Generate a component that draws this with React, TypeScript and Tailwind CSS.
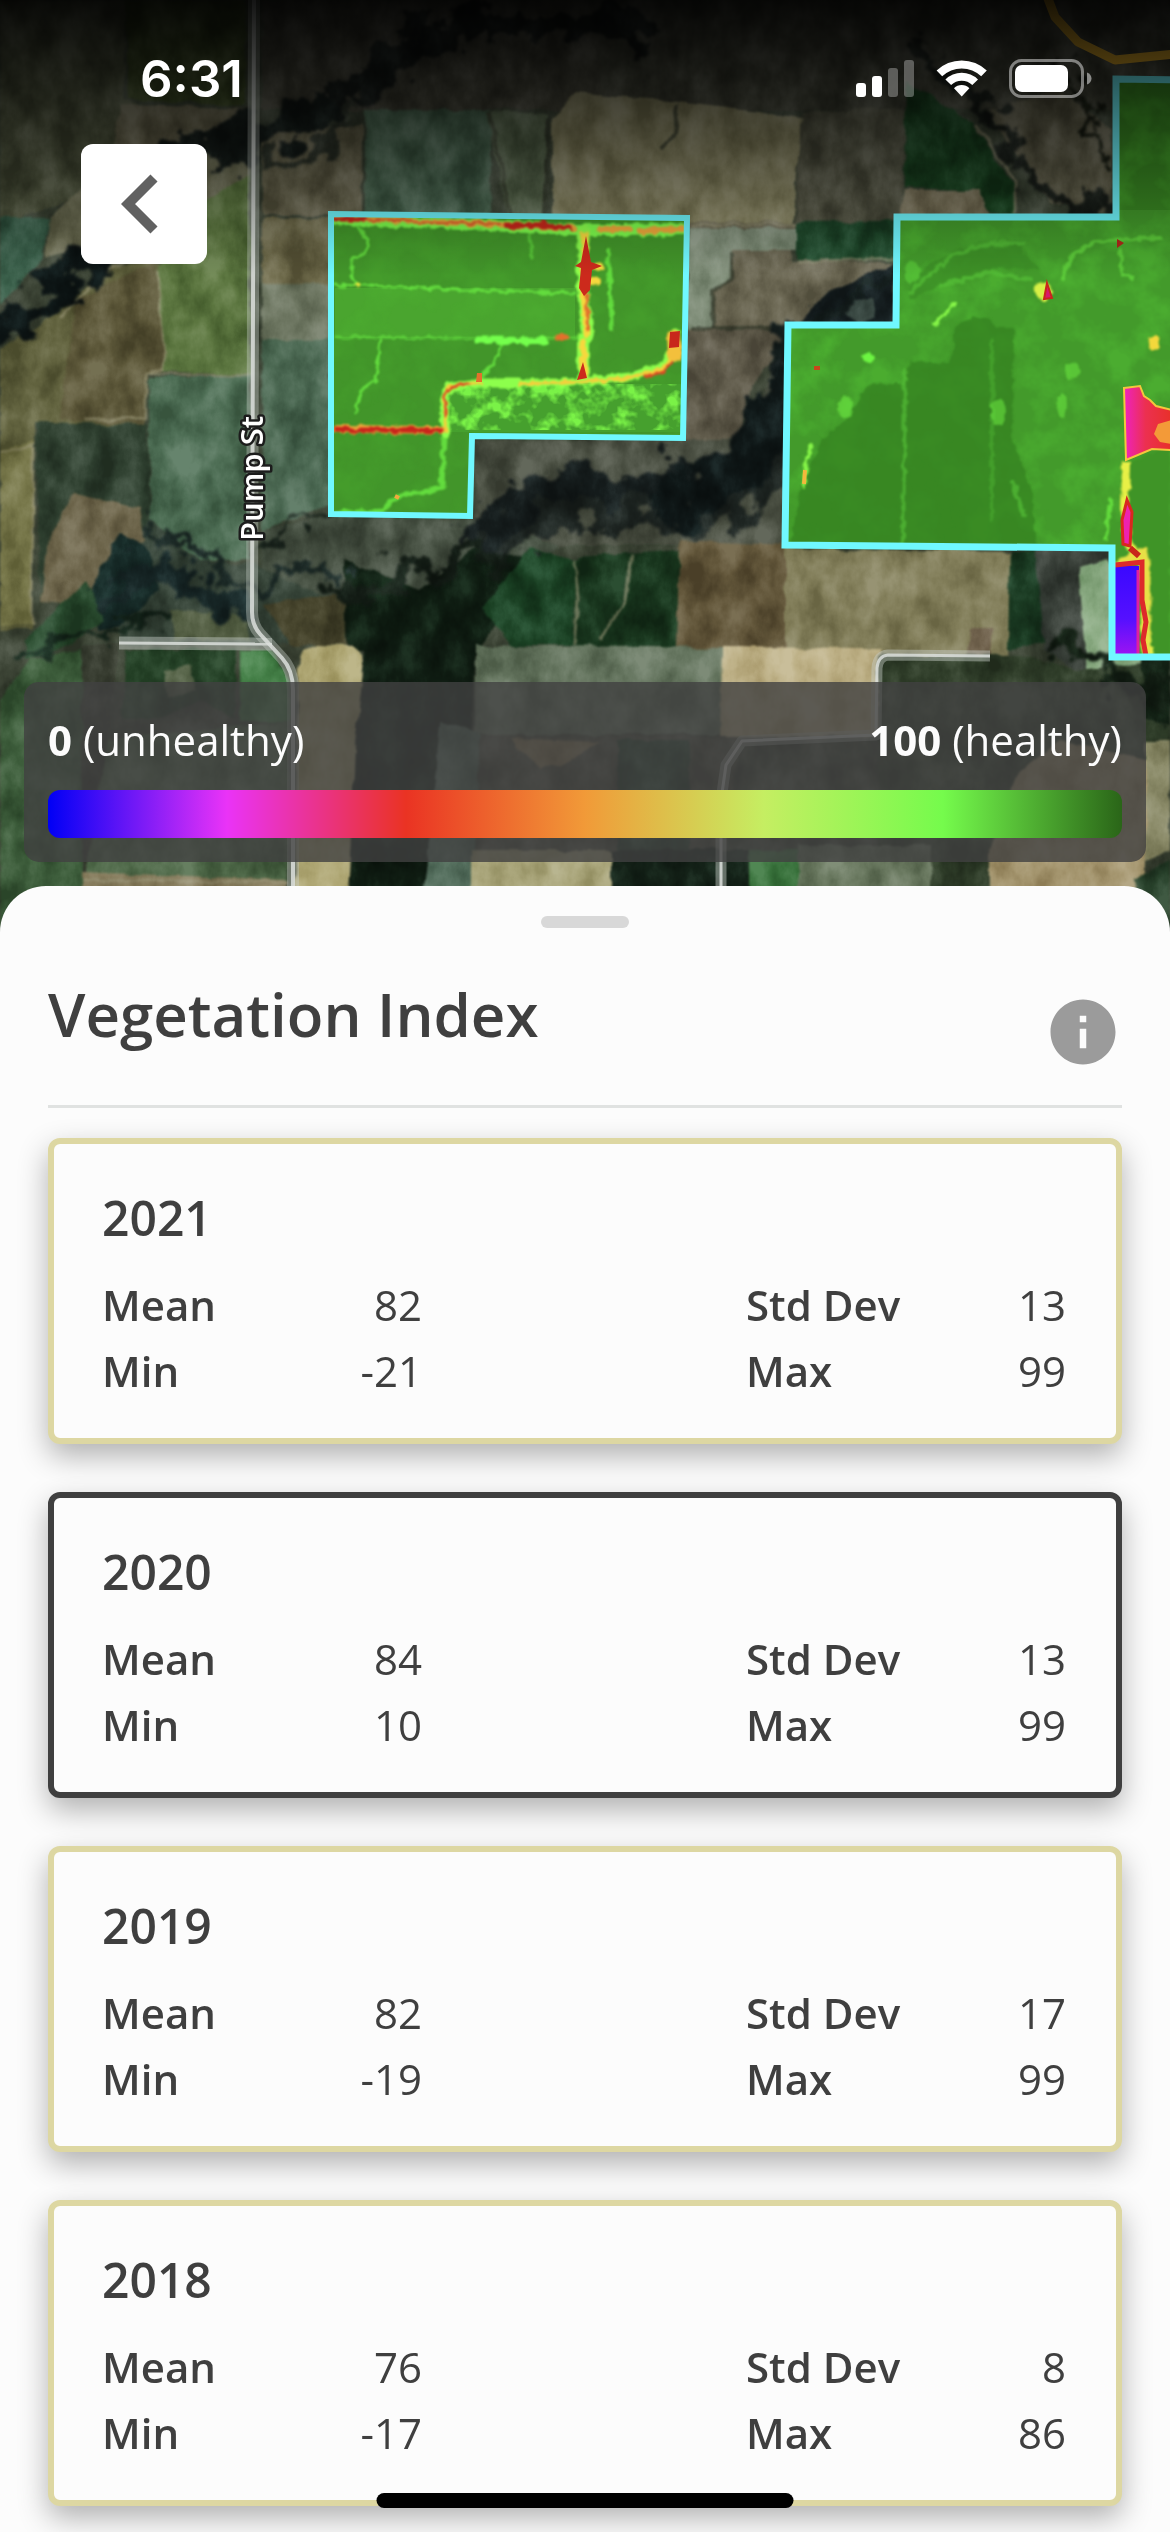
import React, { useState } from 'react';
import { MdInfo } from 'react-icons/md';

interface YearStats {
  year: number;
  mean: number;
  min: number;
  stdDev: number;
  max: number;
}

interface Patch {
  points: string;
  fill: string;
}

const STATS: YearStats[] = [
  { year: 2021, mean: 82, min: -21, stdDev: 13, max: 99 },
  { year: 2020, mean: 84, min: 10, stdDev: 13, max: 99 },
  { year: 2019, mean: 82, min: -19, stdDev: 17, max: 99 },
  { year: 2018, mean: 76, min: -17, stdDev: 8, max: 86 },
];

// Farmland around the two mapped fields, back to front
const LAND: Patch[] = [
  { points: '0,0 125,0 125,100 170,115 85,195 0,225', fill: '#50563f' },
  { points: '125,0 245,0 245,105 130,100', fill: '#3c4a25' },
  { points: '262,0 600,0 600,110 262,110', fill: '#46463a' },
  { points: '600,0 1170,0 1170,110 600,110', fill: '#45473a' },
  { points: '120,105 250,108 250,140 110,165', fill: '#6a6750' },
  { points: '0,218 50,218 42,260 0,305', fill: '#3a5f4a' },
  { points: '50,216 82,190 190,150 250,150 250,200 150,225 45,258', fill: '#6f7056' },
  { points: '0,350 60,310 110,265 160,262 165,370 148,372 145,425 35,422 32,630 0,630', fill: '#62633f' },
  { points: '0,450 35,440 32,625 0,625', fill: '#77774a' },
  { points: '75,300 155,262 165,370 148,372 145,425 60,420 70,350', fill: '#5c5739' },
  { points: '158,265 205,200 250,175 250,375 165,370', fill: '#5c7640' },
  { points: '36,422 148,425 150,545 72,495 40,600', fill: '#2f4030' },
  { points: '149,376 250,375 250,560 200,560 150,520', fill: '#4d6d54' },
  { points: '262,130 362,125 362,215 262,215', fill: '#69664f' },
  { points: '262,218 330,218 330,284 262,284', fill: '#6b6748' },
  { points: '262,284 330,284 330,345 262,345', fill: '#6c7560' },
  { points: '262,340 330,340 330,505 262,530', fill: '#4b6852' },
  { points: '365,110 490,110 490,215 365,215', fill: '#4b6751' },
  { points: '486,112 548,115 542,215 508,215', fill: '#5a694f' },
  { points: '552,118 575,92 680,102 802,118 792,228 552,222', fill: '#8a8765' },
  { points: '802,112 906,108 902,222 795,222', fill: '#565746' },
  { points: '906,80 972,124 1012,182 1016,215 990,214 980,190 905,188', fill: '#1b4522' },
  { points: '905,190 980,190 990,216 900,216', fill: '#7c755c' },
  { points: '985,110 1060,90 1112,130 1112,216 1050,200', fill: '#605e4a' },
  { points: '688,222 797,222 790,262 893,262 785,345 752,385 738,445 683,445', fill: '#6a6652' },
  { points: '797,222 897,221 897,260 797,260', fill: '#1f482b' },
  { points: '688,228 797,228 797,250 732,250 732,280 714,290 714,328 686,328', fill: '#7f8d78' },
  { points: '686,330 785,330 785,345 752,385 738,445 683,462', fill: '#615c4c' },
  { points: '475,440 740,440 788,345 788,545 475,545', fill: '#4a4f42' },
  { points: '800,322 830,290 893,264 893,324', fill: '#172022' },
  { points: '842,312 852,300 872,298 876,316 860,324', fill: '#3d4c46' },
  { points: '262,530 330,515 475,520 560,545 480,600 345,610 262,600', fill: '#465042' },
  { points: '150,520 200,560 255,565 345,605 340,645 120,645 120,560', fill: '#38463a' },
  { points: '170,610 245,615 250,640 175,640', fill: '#4f5a3f' },
  { points: '72,493 140,508 145,540 105,565 80,605 40,602 46,550', fill: '#6b6349' },
  { points: '90,590 118,535 146,545 160,590 120,625 100,630', fill: '#172b28' },
  { points: '25,640 85,580 105,620 60,650 25,660', fill: '#294a2e' },
  { points: '265,605 350,590 345,645 290,645', fill: '#47452d' },
  { points: '345,560 420,590 480,545 530,560 480,650 345,650', fill: '#0f1d12' },
  { points: '482,608 530,548 578,560 572,645 510,645', fill: '#1a4023' },
  { points: '578,558 680,550 676,648 572,648', fill: '#18351d' },
  { points: '680,540 785,545 785,648 676,648', fill: '#62563a' },
  { points: '785,548 1012,552 1008,660 785,648', fill: '#827e5a' },
  { points: '970,628 992,628 992,655 968,655', fill: '#6f614c' },
  { points: '1010,550 1040,553 1048,640 1008,650', fill: '#1a3a22' },
  { points: '1035,550 1108,550 1108,690 1045,650', fill: '#3a413a' },
  { points: '1078,568 1108,560 1142,662 1142,674 1088,672', fill: '#8aaa82' },
  { points: '475,645 722,648 722,735 475,735', fill: '#65755f' },
  { points: '722,647 880,648 878,735 720,738', fill: '#bdb086' },
  { points: '878,655 1020,655 1080,670 1170,660 1170,740 1140,890 878,890', fill: '#2f3d29' },
  { points: '475,735 875,738 740,745 722,890 475,890', fill: '#4c4f40' },
  { points: '510,738 600,742 560,765 540,768', fill: '#8a7b56' },
  { points: '618,740 690,740 690,850 618,850', fill: '#24402c' },
  { points: '0,700 30,660 82,648 82,932 0,932', fill: '#3d5d3b' },
  { points: '82,645 120,645 108,740 82,890', fill: '#363b2f' },
  { points: '126,650 236,650 236,718 200,700 165,718 122,718', fill: '#223e24' },
  { points: '165,670 190,665 196,690 168,700', fill: '#58654a' },
  { points: '240,650 272,650 288,680 288,722 240,722', fill: '#447f47' },
  { points: '108,740 288,722 288,890 82,890', fill: '#4d6747' },
  { points: '82,872 288,880 288,932 82,932', fill: '#857b5c' },
  { points: '298,668 304,650 318,645 354,646 363,654 366,690 355,740 350,880 344,932 295,932', fill: '#aea673' },
  { points: '366,640 475,640 472,730 430,880 430,932 346,932 356,740', fill: '#0f1c12' },
  { points: '440,722 480,735 470,932 420,932 435,780', fill: '#56705f' },
  { points: '470,850 614,850 612,932 470,932', fill: '#a9a57a' },
  { points: '612,850 750,850 750,932 612,932', fill: '#142218' },
  { points: '750,850 798,850 798,932 750,932', fill: '#37703a' },
  { points: '798,845 932,845 930,932 798,932', fill: '#69785f' },
  { points: '990,850 1020,770 1060,740 1146,760 1146,932 990,932', fill: '#a4956e' },
  { points: '1146,740 1170,740 1170,850 1146,860', fill: '#8b8b69' },
  { points: '1142,655 1170,655 1170,725 1146,720', fill: '#122014' },
  { points: '1135,880 1170,860 1170,932 1130,932', fill: '#27402a' },
];

// Tree lines and river beds
const RIVERS = [
  { d: 'M-10 340 L40 305 L80 265 L110 245 L165 175 L185 152 L245 142', w: 34, c: '#0d1515' },
  { d: 'M180 152 L245 144 L300 118 L350 92', w: 32, c: '#151c19' },
  { d: 'M340 98 L410 45 L480 20 L640 25', w: 34, c: '#171c19' },
  { d: 'M262 170 L310 150 L350 120', w: 14, c: '#2f352b' },
  { d: 'M910 40 L960 85 L1010 140 L1050 195 L1110 215', w: 16, c: '#191e19' },
  { d: 'M1060 60 L1090 110 L1105 165', w: 9, c: '#14180f' },
  { d: 'M480 530 L560 480 L620 490 L700 480 L760 440 L790 370', w: 40, c: '#151c1c' },
  { d: 'M500 545 L560 510 L640 515 L730 510 L785 470', w: 26, c: '#1d2421' },
  { d: 'M680 500 L740 470 L785 400', w: 56, c: '#0f1717' },
  { d: 'M785 345 L820 315 L893 275', w: 16, c: '#141d1c' },
  { d: 'M150 525 L200 560 L245 590 L290 565 L345 580', w: 10, c: '#1a2724' },
  { d: 'M110 600 L150 560 L200 590 L240 610', w: 22, c: '#172626' },
  { d: 'M262 550 L300 525 L340 510', w: 7, c: '#18221b' },
  { d: 'M20 650 L90 640 L160 620', w: 9, c: '#14241a' },
  { d: 'M345 600 L420 570 L500 555', w: 20, c: '#131c15' },
  { d: 'M1045 640 L1090 655 L1140 690 L1170 700', w: 18, c: '#111c12' },
];

const TRACKS = [
  'M690 225 L797 224',
  'M797 262 L893 258',
  'M975 125 L1015 180 L1015 214',
  'M575 560 L578 600 L574 645',
  'M632 555 L626 600 L600 640',
  'M85 420 L146 418 L146 372 L165 368 L158 270',
  'M60 318 L108 268 L150 250',
  'M150 372 L250 376',
  'M0 452 L34 445 L32 625',
  'M82 880 L290 882',
];

const HEDGES = ['M690 328 L785 328', 'M678 105 L674 135 L662 150', 'M488 112 L500 160 L510 214', 'M732 252 L732 280 L714 290 L714 328', 'M548 118 L544 216'];

const FIELD_WEST = '331,214 687,218 683,438 472,436 470,516 331,514';
const FIELD_EAST = '1200,80 1116,79 1116,217 897,217 896,325 788,325 785,545 1112,548 1112,657 1200,657';

const MapView: React.FC = () => (
  <svg
    className="absolute inset-0 h-full w-full"
    viewBox="0 0 1170 932"
    preserveAspectRatio="xMidYMid slice"
    role="img"
    aria-label="Satellite map with vegetation index"
  >
    <defs>
      <filter id="rough" x="0" y="0" width="100%" height="100%" colorInterpolationFilters="sRGB">
        <feTurbulence type="fractalNoise" baseFrequency="0.05" numOctaves={2} seed={4} result="n" />
        <feDisplacementMap in="SourceGraphic" in2="n" scale={8} xChannelSelector="R" yChannelSelector="G" />
        <feGaussianBlur stdDeviation={1.2} />
      </filter>
      <filter id="ragged" x="-5%" y="-5%" width="110%" height="110%" colorInterpolationFilters="sRGB">
        <feTurbulence type="fractalNoise" baseFrequency="0.035" numOctaves={5} seed={9} result="n" />
        <feDisplacementMap in="SourceGraphic" in2="n" scale={64} xChannelSelector="R" yChannelSelector="G" />
        <feGaussianBlur stdDeviation={1.5} />
      </filter>
      <filter id="grain" x="0" y="0" width="100%" height="100%" colorInterpolationFilters="sRGB">
        <feTurbulence type="fractalNoise" baseFrequency="0.035 0.025" numOctaves={5} seed={12} />
        <feColorMatrix type="matrix" values="1.8 0 0 0 -0.4  1.8 0 0 0 -0.4  1.8 0 0 0 -0.4  0 0 0 0 1" />
      </filter>
      <filter id="heatRough" x="-5%" y="-5%" width="110%" height="110%" colorInterpolationFilters="sRGB">
        <feTurbulence type="fractalNoise" baseFrequency="0.12" numOctaves={2} seed={2} result="n" />
        <feDisplacementMap in="SourceGraphic" in2="n" scale={7} xChannelSelector="R" yChannelSelector="G" />
        <feGaussianBlur stdDeviation={0.8} />
      </filter>
      <filter id="heatNoise" x="0" y="0" width="100%" height="100%" colorInterpolationFilters="sRGB">
        <feTurbulence type="fractalNoise" baseFrequency="0.03" numOctaves={4} seed={7} />
        <feColorMatrix type="matrix" values="0 0 0 0 0.34  0 0 0 0 0.78  0 0 0 0 0.22  3 0 0 0 -1.2" />
      </filter>
      <filter id="heatPatch" x="0" y="0" width="100%" height="100%" colorInterpolationFilters="sRGB">
        <feTurbulence type="fractalNoise" baseFrequency="0.06" numOctaves={3} seed={21} />
        <feColorMatrix type="matrix" values="0 0 0 0 0.48  0 0 0 0 0.95  0 0 0 0 0.28  4 0 0 0 -1.8" />
      </filter>
      <clipPath id="westClip">
        <polygon points={FIELD_WEST} />
      </clipPath>
      <clipPath id="eastClip">
        <polygon points={FIELD_EAST} />
      </clipPath>
      <linearGradient id="water" x1="0" y1="0" x2="0" y2="1">
        <stop offset="0" stopColor="#3a08ff" />
        <stop offset="0.6" stopColor="#5510ff" />
        <stop offset="1" stopColor="#9a14f2" />
      </linearGradient>
      <linearGradient id="blob" x1="0" y1="0" x2="1" y2="0">
        <stop offset="0" stopColor="#ee22c0" />
        <stop offset="0.45" stopColor="#ec3050" />
        <stop offset="1" stopColor="#e83028" />
      </linearGradient>
      <linearGradient id="topShade" x1="0" y1="0" x2="0" y2="1">
        <stop offset="0" stopColor="#000" stopOpacity="0.9" />
        <stop offset="1" stopColor="#000" stopOpacity="0" />
      </linearGradient>
    </defs>

    <rect width="1170" height="932" fill="#3d4536" />
    <g filter="url(#rough)">
      {LAND.map((p) => (
        <polygon key={p.points} points={p.points} fill={p.fill} />
      ))}
      {TRACKS.map((d) => (
        <path key={d} d={d} fill="none" stroke="#9a9678" strokeOpacity="0.6" strokeWidth="3" />
      ))}
      {HEDGES.map((d) => (
        <path key={d} d={d} fill="none" stroke="#343a2c" strokeOpacity="0.7" strokeWidth="4" />
      ))}
    </g>
    <g filter="url(#ragged)">
      {RIVERS.map((r) => (
        <path key={r.d} d={r.d} fill="none" stroke={r.c} strokeWidth={r.w} strokeLinecap="round" strokeLinejoin="round" />
      ))}
    </g>
    <rect width="1170" height="932" filter="url(#grain)" opacity="0.4" className="mix-blend-soft-light" />

    {/* Roads */}
    <g fill="none" strokeLinejoin="round">
      <path d="M119 643 L272 644" stroke="#c8cfc8" strokeOpacity="0.45" strokeWidth="13" />
      <path d="M119 643 L272 644" stroke="#dcdfdc" strokeOpacity="0.85" strokeWidth="3" />
      <path d="M254 0 L252 612 Q252 625 260 634 L282 658 Q293 670 293 690 L293 932" stroke="#c8cfc8" strokeOpacity="0.4" strokeWidth="12" />
      <path d="M254 0 L252 612 Q252 625 260 634 L282 658 Q293 670 293 690 L293 932" stroke="#dcdfdc" strokeOpacity="0.85" strokeWidth="4" />
      <path d="M990 656 L888 655 Q878 656 877 668 L876 735 L742 741 L726 765 L721 800 L721 932" stroke="#c8cfc8" strokeOpacity="0.45" strokeWidth="11" />
      <path d="M990 656 L888 655 Q878 656 877 668 L876 735 L742 741 L726 765 L721 800 L721 932" stroke="#dcdfdc" strokeOpacity="0.85" strokeWidth="3" />
      <path d="M1047 -4 L1055 17 L1078 42 L1115 60 L1174 54" stroke="#efb62c" strokeWidth="9" />
    </g>

    {/* West field */}
    <g clipPath="url(#westClip)">
      <rect x="328" y="208" width="366" height="314" fill="#42952a" />
      <rect x="335" y="288" width="240" height="50" fill="#4aa52f" />
      <rect x="328" y="208" width="366" height="314" filter="url(#heatNoise)" opacity="0.15" />
      <rect x="446" y="384" width="240" height="48" fill="#46a02e" />
      <rect x="446" y="384" width="240" height="46" filter="url(#heatPatch)" />
      <g filter="url(#heatRough)" fill="none" strokeLinejoin="round" strokeLinecap="round">
        <g stroke="#63dc3e" strokeWidth="3">
          <path d="M355 222 L368 240 L366 252 L352 260 L352 275 L358 286" />
          <path d="M335 285 L400 287 L460 290 L575 293" />
          <path d="M335 337 L460 338 L590 338" strokeOpacity="0.7" />
          <path d="M380 340 L376 380 L362 390 L355 412" />
          <path d="M503 342 L492 366 L480 378" />
          <path d="M444 436 L442 486 L430 492 L405 494 L392 500 L384 511 L335 513" strokeWidth="5" />
          <path d="M608 250 L612 330" strokeWidth="4" />
          <path d="M530 235 L532 258" strokeOpacity="0.7" />
        </g>
        <path d="M478 340 L545 341" stroke="#74ff4c" strokeWidth="7" />
        <path d="M335 219 L440 223 L510 226 L575 230 L620 230 L684 229" stroke="#7dff4c" strokeWidth="12" />
        <path d="M335 218 L440 222 L510 225 L575 228" stroke="#f3a83c" strokeWidth="6" />
        <path d="M600 229 L630 229 M640 231 L682 229" stroke="#f3a83c" strokeWidth="6" />
        <path d="M336 219 L364 219 M506 225 L548 226 L570 228 M543 222 L545 226" stroke="#c8261b" strokeWidth="5" />
        <path d="M364 220 L500 224" stroke="#dd5a2a" strokeWidth="2" />
        <path d="M584 232 L582 270 L584 300 L588 336 M583 340 L583 378" stroke="#8bff4c" strokeWidth="12" />
        <path d="M585 235 L584 290 L587 334 M583 342 L584 378 M585 268 L600 266 M590 280 L598 282" stroke="#f6d83e" strokeWidth="7" />
        <path d="M587 295 L588 330" stroke="#e2702c" strokeWidth="4" />
        <path d="M558 338 L566 337" stroke="#e2702c" strokeWidth="5" />
        <path d="M446 432 L444 400 L450 386 L480 383 L560 383 L630 377 L664 366 L675 348 L676 332" stroke="#8dff4c" strokeWidth="9" />
        <path d="M446 430 L444 400 L450 386 L480 383 M520 384 L560 383 L630 378 L664 368 L675 350" stroke="#f3d03c" strokeWidth="4" />
        <path d="M445 418 L445 396 L452 386 L468 384 M645 377 L664 371 L672 362" stroke="#dc4a24" strokeWidth="3" />
        <path d="M335 429 L440 430" stroke="#f3a83c" strokeWidth="8" />
        <path d="M336 429 L354 430 L400 430 L440 431" stroke="#c8261b" strokeWidth="5" />
        <path d="M358 285 L358 286" stroke="#e8e83e" strokeWidth="5" />
        <path d="M674 336 L675 355" stroke="#f3c03c" strokeWidth="14" />
      </g>
      <path d="M586 236 L591 262 L602 266 L592 270 L590 290 L584 296 L579 288 L581 268 L575 266 L581 262 Z" fill="#cc2a1c" />
      <path d="M583 362 L587 378 L577 380 Z" fill="#cc2a1c" />
      <path d="M670 332 L680 331 L679 347 L669 348 Z" fill="#c8261b" />
      <path d="M477 373 L482 373 L482 382 L476 382 Z" fill="#e2702c" />
      <path d="M395 496 L399 498" stroke="#f3a83c" strokeWidth="4" />
    </g>
    <polygon points={FIELD_WEST} fill="none" stroke="#70f8ff" strokeWidth="6" />

    {/* East field */}
    <g clipPath="url(#eastClip)">
      <rect x="780" y="70" width="390" height="594" fill="#439a2b" />
      <rect x="1118" y="80" width="52" height="130" fill="#3a8a23" />
      <rect x="780" y="70" width="390" height="594" filter="url(#heatNoise)" opacity="0.4" />
      <g filter="url(#heatRough)">
        <path d="M910 362 L950 364 L955 328 L972 316 L990 320 L998 328 L1014 328 L1012 440 L1032 490 L1036 548 L790 548 L800 490 L822 440 L845 420 L870 384 L905 384 Z" fill="#348020" fillOpacity="0.75" />
        <path d="M908 290 L925 268 L960 248 L1020 246 L1040 270 L1000 268 L950 280 L910 300 Z" fill="#3b8a25" fillOpacity="0.7" />
        <path d="M1126 465 L1170 445 L1170 660 L1145 660 L1143 560 L1128 545 Z" fill="#3f9427" />
        <g fill="none" stroke="#56bf37" strokeWidth="4" strokeOpacity="0.7" strokeLinecap="round">
          <path d="M905 370 L903 545" />
          <path d="M992 340 L992 520" strokeOpacity="0.4" />
          <path d="M910 292 L950 256 L990 243 L1024 244" />
          <path d="M940 286 L990 272 L1030 280" />
          <path d="M1062 278 L1070 258 L1092 243 L1110 240 L1160 238" stroke="#66dd40" />
          <path d="M1120 250 L1122 275 L1134 278" stroke="#66dd40" />
          <path d="M1012 480 L1024 515" />
          <path d="M1110 500 L1106 540" stroke="#70f545" />
        </g>
        <g fill="none" stroke="#86f548" strokeWidth="4" strokeLinecap="round">
          <path d="M934 324 L944 314 L954 304" />
          <path d="M812 444 L806 462 L804 486" />
        </g>
        <ellipse cx="846" cy="408" rx="8" ry="11" fill="#69e240" fillOpacity="0.7" />
        <ellipse cx="998" cy="412" rx="8" ry="13" fill="#69e240" fillOpacity="0.6" />
        <ellipse cx="868" cy="358" rx="7" ry="4" fill="#6df542" />
        <ellipse cx="912" cy="272" rx="8" ry="12" fill="#5ed23c" fillOpacity="0.6" />
        <ellipse cx="1072" cy="370" rx="8" ry="9" fill="#69e240" fillOpacity="0.6" />
        <ellipse cx="1062" cy="405" rx="5" ry="12" fill="#69e240" fillOpacity="0.6" />
        <ellipse cx="1154" cy="344" rx="6" ry="7" fill="#f3d83c" />
        <ellipse cx="1043" cy="291" rx="9" ry="9" fill="#d8f046" />
        <path d="M1126 462 L1125 510 L1128 545 L1142 560 L1146 600 L1144 622 L1150 655" fill="none" stroke="#e8f046" strokeWidth="8" />
        <path d="M1116 566 L1134 556 L1142 552 L1146 566 L1146 655" fill="none" stroke="#e8e046" strokeWidth="9" />
      </g>
      <path d="M1124 388 L1140 386 L1144 396 L1150 400 L1156 406 L1172 410 L1172 450 L1152 449 L1126 460 Z" fill="url(#blob)" stroke="#f3c83c" strokeWidth="2" />
      <path d="M1172 420 L1158 424 L1154 434 L1160 442 L1172 444 Z" fill="#f39a38" />
      <path d="M1047 283 L1052 298 L1044 299 Z" fill="#d8186c" stroke="#c8261b" strokeWidth="2" />
      <path d="M1117 239 L1124 243 L1117 248 Z" fill="#b02818" />
      <path d="M814 368 L820 368" stroke="#c8461b" strokeWidth="4" />
      <path d="M805 470 L804 484" stroke="#f3b83c" strokeWidth="4" />
      <path d="M1127 500 L1132 512 L1130 546 L1123 544 L1122 520 Z" fill="#ee22b0" stroke="#d8281e" strokeWidth="3" />
      <path d="M1130 548 L1139 556" stroke="#c8261b" strokeWidth="6" />
      <rect x="1115" y="566" width="24" height="88" fill="url(#water)" />
      <path d="M1115 565 L1134 563 L1142 562 L1142 600 L1146 622 L1143 640 L1146 656" fill="none" stroke="#dd2a2a" strokeWidth="5" />
      <path d="M1138 570 L1138 654" stroke="#e020a0" strokeWidth="3" />
    </g>
    <polygon points={FIELD_EAST} fill="none" stroke="#70f8ff" strokeWidth="7" />

    <text
      transform="translate(263 541) rotate(-90)"
      className="font-['Open_Sans',sans-serif] text-[31px] font-semibold"
      fill="#fff"
      stroke="#1c1c1c"
      strokeWidth="5"
      strokeLinejoin="round"
      paintOrder="stroke"
    >
      Pump St
    </text>

    <rect width="1170" height="276" fill="url(#topShade)" />
  </svg>
);

const StatusBar: React.FC = () => (
  <div className="flex h-36 items-center justify-between pt-3 pr-[78px] pl-[140px]">
    <span className="font-[Inter,sans-serif] text-[51px] leading-none font-semibold text-white">6:31</span>
    <svg width="236" height="40" viewBox="0 0 236 40" fill="#fff" aria-hidden="true">
      <rect x="0" y="25" width="10" height="14" rx="3" />
      <rect x="16" y="18" width="10" height="21" rx="3" />
      <rect x="32" y="10" width="10" height="29" rx="3" opacity="0.3" />
      <rect x="48" y="2" width="10" height="37" rx="3" opacity="0.3" />
      {/* wifi */}
      <path d="M80.6 12.6a36 36 0 0 1 50.2 0l-5.6 5.7a28 28 0 0 0-39 0z" />
      <path d="M89.4 21.4a23.4 23.4 0 0 1 32.6 0l-5.7 5.7a15.3 15.3 0 0 0-21.2 0z" />
      <path d="M98 30.2a11 11 0 0 1 15.4 0l-7.7 8.2z" />
      {/* battery */}
      <rect x="154.5" y="2.5" width="72" height="36" rx="11" fill="none" stroke="#fff" strokeOpacity="0.45" strokeWidth="3" />
      <rect x="159" y="7" width="53" height="27" rx="7" />
      <path d="M231 14.5c3 1.2 4.5 3.4 4.5 6s-1.5 4.800-4.5 6z" opacity="0.5" />
    </svg>
  </div>
);

const Legend: React.FC = () => (
  <div className="mx-6 mt-auto mb-[70px] rounded-[15px] bg-[#414141]/80 p-6 text-[42px] leading-[68px] text-[#fcfcfc]">
    <div className="flex justify-between">
      <span>
        <strong className="font-bold">0</strong> (unhealthy)
      </span>
      <span>
        <strong className="font-bold">100</strong> (healthy)
      </span>
    </div>
    <div className="mt-4 h-12 rounded-xl bg-[linear-gradient(to_right,#0000f5,#ea33f7,#ea3323,#f19a38,#c5ee62,#75fb4c,#2a6518)]" />
  </div>
);

const Stat: React.FC<{ label: string; value: number }> = ({ label, value }) => (
  <span className="flex justify-between pr-0.5">
    <span className="font-semibold">{label}</span>
    <span>{value}</span>
  </span>
);

interface YearCardProps {
  stats: YearStats;
  selected: boolean;
  onSelect: () => void;
}

const YearCard: React.FC<YearCardProps> = ({ stats, selected, onSelect }) => (
  <button
    type="button"
    aria-pressed={selected}
    onClick={onSelect}
    className={`block w-full rounded-xl border-[6px] bg-[#fcfcfc] px-12 pt-[42px] pb-[34px] text-left shadow-[0_12px_30px_rgba(0,0,0,0.3)] ${selected ? 'border-[#3f3f3f]' : 'border-[#ddd7a2]'}`}
  >
    <span className="block text-[48px] leading-[64px] font-semibold">{stats.year}</span>
    <span className="mt-[22px] grid grid-cols-3 text-[42px] leading-[66px]">
      <span>
        <Stat label="Mean" value={stats.mean} />
        <Stat label="Min" value={stats.min} />
      </span>
      <span className="col-start-3">
        <Stat label="Std Dev" value={stats.stdDev} />
        <Stat label="Max" value={stats.max} />
      </span>
    </span>
  </button>
);

export default function App() {
  const [selectedYear, setSelectedYear] = useState<number>(2020);

  return (
    <div className="flex min-h-screen flex-col bg-[#fcfcfc] font-['Open_Sans',sans-serif] text-[#3f3f3f]">
      <section className="relative h-[932px] overflow-hidden">
        <MapView />
        <div className="relative flex h-full flex-col">
          <StatusBar />
          <button
            type="button"
            aria-label="Back"
            className="ml-[81px] flex h-[120px] w-[126px] items-center justify-center rounded-xl bg-white"
          >
            <svg className="mr-2" width="38" height="60" viewBox="0 0 38 60" fill="none" aria-hidden="true">
              <path d="M33 4 L7 30 L33 56" stroke="#616161" strokeWidth="10" />
            </svg>
          </button>
          <Legend />
        </div>
      </section>

      <main className="relative -mt-[46px] flex-1 rounded-t-[46px] bg-[#fcfcfc] px-12 pt-[30px] pb-6">
        <div className="mx-auto h-3 w-[88px] rounded-full bg-[#d8d8d8]" />
        <header className="mt-[45px] flex items-start justify-between border-b-[3px] border-[#e0e2e1] pb-[34px]">
          <h1 className="text-[60px] leading-[82px] font-semibold">Vegetation Index</h1>
          <button type="button" aria-label="About the vegetation index" className="mt-5 text-[#9b9b9b]">
            <MdInfo className="h-[78px] w-[78px]" />
          </button>
        </header>
        <div className="mt-[30px] flex flex-col gap-12">
          {STATS.map((s) => (
            <YearCard key={s.year} stats={s} selected={s.year === selectedYear} onSelect={() => setSelectedYear(s.year)} />
          ))}
        </div>
      </main>

      <div className="fixed bottom-6 left-1/2 h-[15px] w-[417px] -translate-x-1/2 rounded-full bg-black" />
    </div>
  );
}
